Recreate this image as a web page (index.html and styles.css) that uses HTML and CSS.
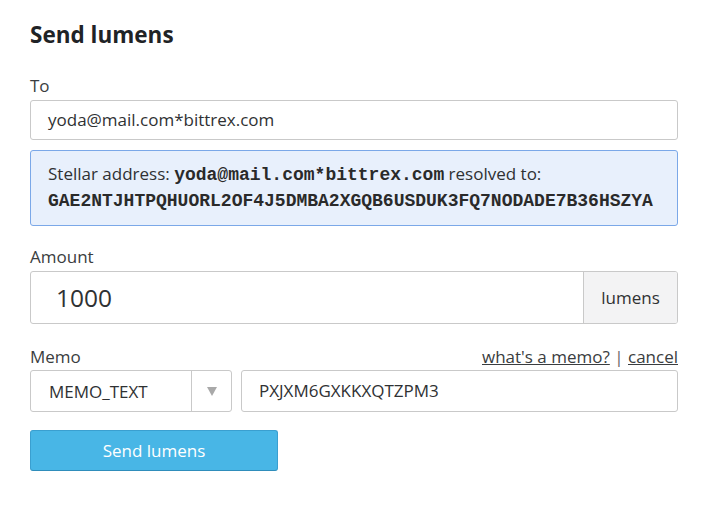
FILE: index.html
```html
<!DOCTYPE html>
<html lang="en">
<head>
<meta charset="utf-8">
<title>Send lumens</title>
<link rel="stylesheet" href="styles.css">
</head>
<body>
<div class="page">
  <h1 class="title">Send lumens</h1>

  <div class="label">To</div>
  <div class="input input-to">yoda@mail.com*bittrex.com</div>
  <div class="resolved">
    <div class="resolved-line">Stellar address: <span class="mono">yoda@mail.com*bittrex.com</span> resolved to:</div>
    <div class="resolved-line"><span class="mono">GAE2NTJHTPQHUORL2OF4J5DMBA2XGQB6USDUK3FQ7NODADE7B36HSZYA</span></div>
  </div>

  <div class="label label-amount">Amount</div>
  <div class="amount-group">
    <div class="amount-value">1000</div>
    <div class="amount-addon">lumens</div>
  </div>

  <div class="label label-memo">
    <span>Memo</span>
    <span class="memo-links"><a href="#" class="link">what's a memo?</a> <span class="sep">|</span> <a href="#" class="link">cancel</a></span>
  </div>
  <div class="memo-row">
    <div class="select">
      <div class="select-value">MEMO_TEXT</div>
      <div class="select-arrow">
        <svg width="10" height="9" viewBox="0 0 10 9"><path d="M0 0 H10 L5 9 Z" fill="#a9a9a9"/></svg>
      </div>
    </div>
    <div class="input memo-input">PXJXM6GXKKXQTZPM3</div>
  </div>

  <button class="btn">Send lumens</button>
</div>
</body>
</html>
```
FILE: styles.css
```css
html, body {
  margin: 0;
  padding: 0;
  background: #ffffff;
}
body {
  font-family: "Open Sans", "Liberation Sans", sans-serif;
  font-size: 17px;
  color: #333639;
}
.page {
  width: 648px;
  padding: 19px 0 0 30px;
}
.title {
  margin: 0;
  font-size: 22.5px;
  line-height: 32px;
  font-weight: 700;
  color: #1f2326;
}
.label {
  margin-top: 23px;
  line-height: 24px;
  font-size: 17px;
  color: #3a3d40;
  display: flex;
  justify-content: space-between;
}
.label-amount { margin-top: 19px; }
.label-memo { margin-top: 21px; }
.input {
  margin-top: 2px;
  height: 40px;
  box-sizing: border-box;
  border: 1px solid #c9c9c9;
  border-radius: 3px;
  padding: 0 17px;
  display: flex;
  align-items: center;
  line-height: 24px;
  color: #2f3133;
}
.resolved {
  margin-top: 10px;
  box-sizing: border-box;
  background: #e8f0fc;
  border: 1px solid #7ba8e8;
  border-radius: 3px;
  padding: 10px 17px 12px;
  color: #2f3133;
}
.resolved-line {
  line-height: 26px;
  height: 26px;
  white-space: nowrap;
}
.mono {
  font-family: "Liberation Mono", "DejaVu Sans Mono", monospace;
  font-weight: 700;
  font-size: 18px;
  color: #2a2a2a;
}
.amount-group {
  margin-top: 2px;
  height: 53px;
  box-sizing: border-box;
  border: 1px solid #c9c9c9;
  border-radius: 3px;
  display: flex;
  overflow: hidden;
}
.amount-value {
  flex: 1;
  display: flex;
  align-items: center;
  padding-left: 25px;
  font-size: 24.5px;
  color: #2f3133;
}
.amount-addon {
  width: 93px;
  border-left: 1px solid #c9c9c9;
  background: #f3f3f4;
  display: flex;
  align-items: center;
  justify-content: center;
  color: #2f3133;
}
.memo-links {
  color: #3a3d40;
}
.link {
  color: #3a3d40;
  text-decoration: underline;
}
.sep {
  color: #666666;
}
.memo-row {
  margin-top: 1px;
  display: flex;
  gap: 9px;
}
.select {
  width: 202px;
  height: 42px;
  box-sizing: border-box;
  border: 1px solid #c9c9c9;
  border-radius: 3px;
  display: flex;
}
.select-value {
  flex: 1;
  display: flex;
  align-items: center;
  padding-left: 18px;
  color: #2f3133;
}
.select-arrow {
  width: 39px;
  border-left: 1px solid #c9c9c9;
  display: flex;
  align-items: center;
  justify-content: center;
}
.memo-input {
  flex: 1;
  margin-top: 0;
  height: 42px;
}
.btn {
  margin-top: 18px;
  width: 248px;
  height: 41px;
  border: 1px solid #3a9fd0;
  border-bottom-color: #2f8dbb;
  border-radius: 3px;
  background: #48b6e6;
  color: #ffffff;
  font-family: "Open Sans", "Liberation Sans", sans-serif;
  font-size: 17px;
  padding: 0;
  display: block;
}
```
